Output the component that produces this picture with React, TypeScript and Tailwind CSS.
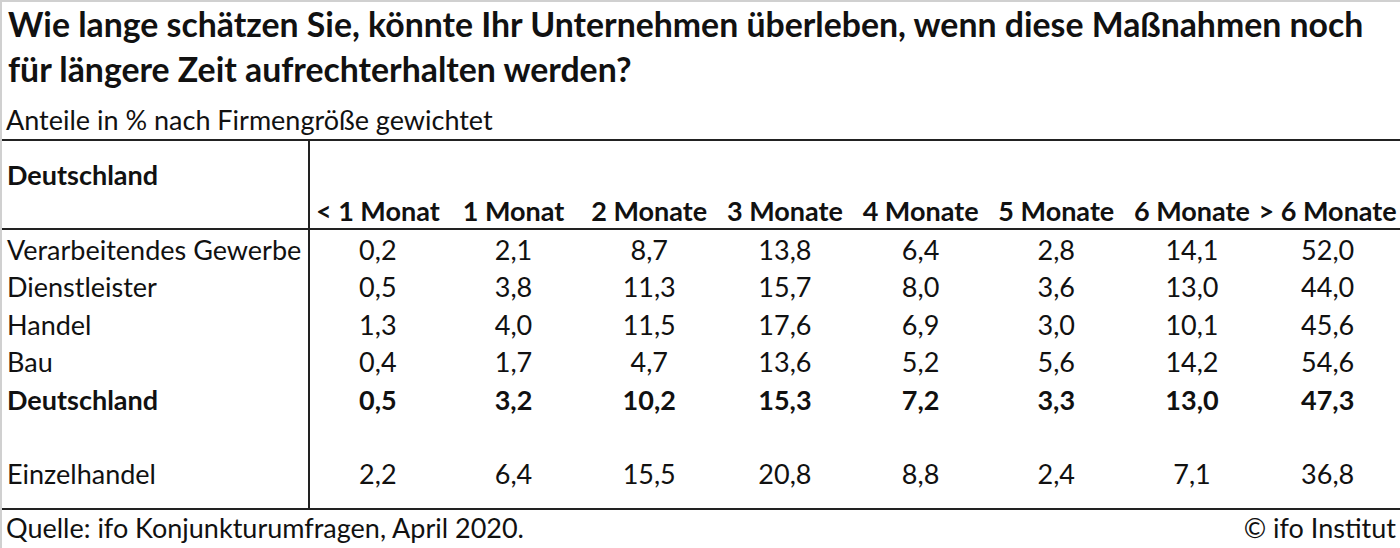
import React from "react";

const cols = ["< 1 Monat", "1 Monat", "2 Monate", "3 Monate", "4 Monate", "5 Monate", "6 Monate", "> 6 Monate"];

const rows: { label: string; values: string[]; bold?: boolean }[] = [
  { label: "Verarbeitendes Gewerbe", values: ["0,2", "2,1", "8,7", "13,8", "6,4", "2,8", "14,1", "52,0"] },
  { label: "Dienstleister", values: ["0,5", "3,8", "11,3", "15,7", "8,0", "3,6", "13,0", "44,0"] },
  { label: "Handel", values: ["1,3", "4,0", "11,5", "17,6", "6,9", "3,0", "10,1", "45,6"] },
  { label: "Bau", values: ["0,4", "1,7", "4,7", "13,6", "5,2", "5,6", "14,2", "54,6"] },
  { label: "Deutschland", values: ["0,5", "3,2", "10,2", "15,3", "7,2", "3,3", "13,0", "47,3"], bold: true },
];

const last = { label: "Einzelhandel", values: ["2,2", "6,4", "15,5", "20,8", "8,8", "2,4", "7,1", "36,8"] };

function Row({ label, values, bold }: { label: string; values: string[]; bold?: boolean }) {
  return (
    <div className={`flex h-[37.5px] ${bold ? "font-bold" : ""}`}>
      <div className="w-[308px] shrink-0 border-r-2 border-[#222] pl-[5px] pt-[2px] flex items-center whitespace-nowrap">{label}</div>
      {values.map((v, i) => (
        <div key={i} className="w-[135.7px] shrink-0 pt-[2px] flex items-center justify-center">{v}</div>
      ))}
    </div>
  );
}

export default function App() {
  return (
    <div
      className="w-[1400px] h-[548px] bg-white border-t-2 border-l-2 border-[#d0d0d0] overflow-hidden text-[#111]"
      style={{ fontFamily: "Lato, 'Open Sans', sans-serif" }}
    >
      <div className="pl-[6px] text-[33.8px] font-bold leading-[45px] whitespace-nowrap">
        <div>Wie lange schätzen Sie, könnte Ihr Unternehmen überleben, wenn diese Maßnahmen noch</div>
        <div>für längere Zeit aufrechterhalten werden?</div>
      </div>
      <div className="pl-[4px] text-[27px] leading-[32px] h-[47px] pt-[9px] flex items-center">Anteile in % nach Firmengröße gewichtet</div>
      <div className="border-t-2 border-b-2 border-[#222] text-[27px] leading-[32px]">
        <div className="flex h-[89px] border-b-2 border-[#222] font-bold">
          <div className="w-[308px] shrink-0 border-r-2 border-[#222] pl-[5px] pt-[18px]">Deutschland</div>
          {cols.map((c) => (
            <div key={c} className="w-[135.7px] shrink-0 flex items-end justify-center leading-[34px] whitespace-nowrap">
              {c}
            </div>
          ))}
        </div>
        {rows.map((r) => (
          <Row key={r.label} label={r.label} values={r.values} bold={r.bold} />
        ))}
        <Row label="" values={["", "", "", "", "", "", "", ""]} />
        <div className="flex h-[53px]">
          <div className="w-[308px] shrink-0 border-r-2 border-[#222] pl-[5px] pt-[3px]">{last.label}</div>
          {last.values.map((v, i) => (
            <div key={i} className="w-[135.7px] shrink-0 text-center pt-[3px]">{v}</div>
          ))}
        </div>
      </div>
      <div className="flex justify-between pl-[4px] pr-[4px] text-[27px] leading-[32px] h-[38px] pt-[2px]">
        <span>Quelle: ifo Konjunkturumfragen, April 2020.</span>
        <span>© ifo Institut</span>
      </div>
    </div>
  );
}
